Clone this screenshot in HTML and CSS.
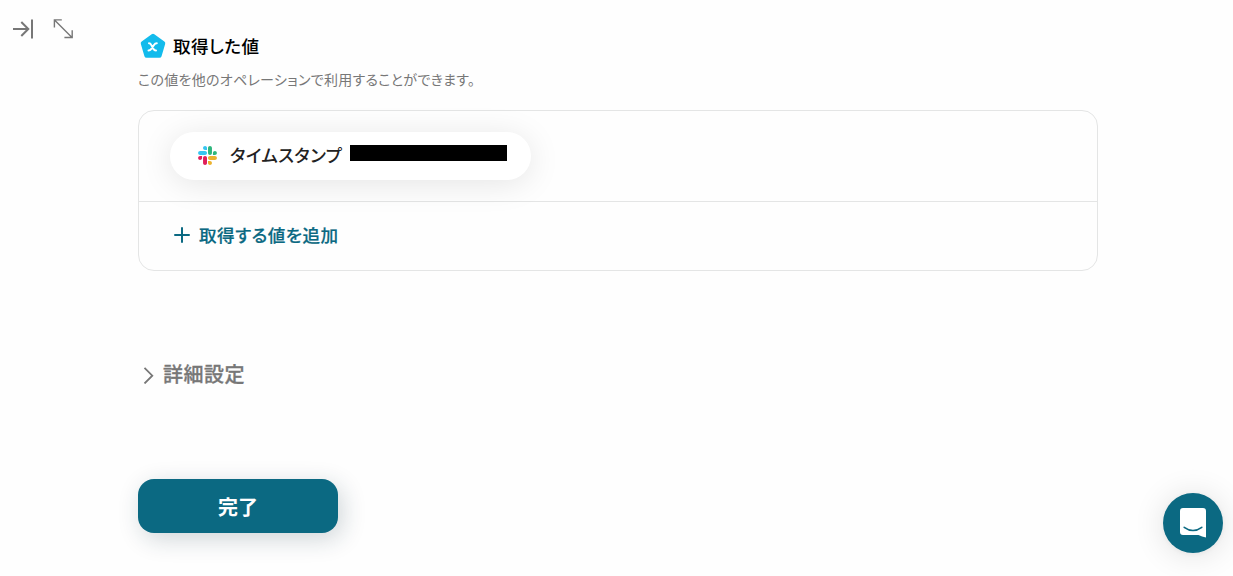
FILE: index.html
```html
<!DOCTYPE html>
<html lang="ja">
<head>
<meta charset="utf-8">
<title>取得した値</title>
<link rel="stylesheet" href="styles.css">
</head>
<body>
<div class="page">
  <nav class="tools">
    <svg width="22" height="22" viewBox="0 0 22 22" fill="none" stroke="#777" stroke-width="2"><path d="M1 11H16M9.300 4L16.300 11L9.300 18M20 1.500V20.500"/></svg>
    <svg width="22" height="22" viewBox="0 0 22 22" fill="none" stroke="#777" stroke-width="1.400"><path d="M2.500 2L20 19.500M2.400 9.500V1.900H9.800M12.400 19.500H20.200V12.200"/></svg>
  </nav>
  <main class="main">
    <header class="heading">
      <svg width="26" height="26" viewBox="0 0 26 26"><path d="M13 3L23 10.300L19.400 22.600H6.600L3 10.300Z" fill="#13bbec" stroke="#13bbec" stroke-width="4.500" stroke-linejoin="round"/><path d="M9 10.300C10.200 10.300 10.700 10.900 11.200 11.900L13.500 16.100C14 17 14.700 17.500 16 17.500M16.800 10.300C15.400 10.300 14.600 11 13.800 12.200L11.300 15.900C10.500 17 9.800 17.500 8.500 17.500" fill="none" stroke="#fff" stroke-width="2" stroke-linecap="round"/></svg>
      <h2 class="title">取得した値</h2>
    </header>
    <p class="note">この値を他のオペレーションで利用することができます。</p>
    <section class="card">
      <div class="values">
        <div class="pill">
          <svg class="slack" width="19" height="19" viewBox="0 0 127 127"><path fill="#e01e5a" d="M27.200 80c0 7.300-5.900 13.200-13.200 13.200S.8 87.300.8 80s5.900-13.200 13.200-13.200h13.200V80zm6.600 0c0-7.300 5.900-13.200 13.200-13.200S60.200 72.700 60.200 80v33c0 7.300-5.900 13.200-13.200 13.200s-13.200-5.900-13.200-13.200V80z"/><path fill="#36c5f0" d="M47 27c-7.300 0-13.200-5.900-13.200-13.200S39.700.6 47 .6s13.200 5.900 13.200 13.200V27H47zm0 6.700c7.300 0 13.200 5.900 13.200 13.200S54.300 60.100 47 60.100H13.900C6.600 60.100.7 54.200.7 46.900s5.900-13.200 13.200-13.200H47z"/><path fill="#2eb67d" d="M99.900 46.900c0-7.300 5.900-13.200 13.200-13.200s13.200 5.900 13.200 13.200-5.900 13.200-13.200 13.200H99.900V46.900zm-6.600 0c0 7.300-5.900 13.200-13.200 13.200s-13.200-5.900-13.200-13.200V13.800C66.900 6.500 72.800.6 80.100.6s13.200 5.900 13.200 13.200v33.100z"/><path fill="#ecb22e" d="M80.100 99.800c7.300 0 13.200 5.900 13.200 13.200s-5.900 13.200-13.200 13.200-13.200-5.900-13.200-13.200V99.800h13.200zm0-6.600c-7.300 0-13.200-5.900-13.200-13.200s5.900-13.200 13.200-13.200h33.100c7.300 0 13.200 5.900 13.200 13.200s-5.900 13.200-13.200 13.200H80.100z"/></svg>
          <span class="pill-label">タイムスタンプ</span>
          <span class="redacted"></span>
        </div>
      </div>
      <button class="add">
        <svg width="16" height="16" viewBox="0 0 16 16" fill="none" stroke="#0b6982" stroke-width="2" stroke-linecap="round"><path d="M8 1V15M1 8H15"/></svg>
        <span>取得する値を追加</span>
      </button>
    </section>
    <div class="advanced">
      <svg width="12" height="18" viewBox="0 0 12 18" fill="none" stroke="#777" stroke-width="1.800"><path d="M1.500 1.900L9.300 9.700L1.500 17.500"/></svg>
      <span class="advanced-label">詳細設定</span>
    </div>
    <button class="done">完了</button>
  </main>
</div>
<button class="chat" aria-label="チャット">
  <svg width="28" height="32" viewBox="0 0 28 32"><path d="M4 1H24A3 3 0 0 1 27 4V30.500Q23 29.800 19.500 28H4A3 3 0 0 1 1 25V4A3 3 0 0 1 4 1Z" fill="#fff"/><path d="M5.200 20.300Q14 26.700 22.800 20.300" fill="none" stroke="#0b6982" stroke-width="1.600" stroke-linecap="round"/></svg>
</button>
</body>
</html>
```
FILE: styles.css
```css
* { box-sizing: border-box; }
body {
  margin: 0;
  height: 576px;
  overflow: hidden;
  background: #fefefe;
  color: #000;
  font-family: "Noto Sans CJK JP", sans-serif;
  font-feature-settings: "palt";
}
button { border: 0; padding: 0; font: inherit; font-feature-settings: inherit; }
svg { display: block; flex: none; }
.page { display: flex; }
.tools {
  display: flex;
  gap: 18px;
  width: 138px;
  padding: 18px 0 0 12px;
}
.main { width: 960px; padding-top: 33px; }
.heading { display: flex; align-items: center; height: 26px; padding-left: 2px; gap: 7px; }
.title { margin: 0; font-size: 17.600px; font-weight: 500; letter-spacing: 0.400px; line-height: 26px; }
.note { margin: 10px 0 0; font-size: 14px; line-height: 20px; letter-spacing: 0.300px; color: #777; }
.card {
  margin-top: 21px;
  height: 161px;
  border: 1px solid #e4e5e5;
  border-radius: 16px;
}
.values { height: 91px; padding: 21px 31px; border-bottom: 1px solid #e4e5e5; }
.pill {
  display: flex;
  align-items: center;
  width: 361px;
  height: 48px;
  padding: 0 0 2px 28px;
  border-radius: 24px;
  background: #fff;
  box-shadow: 0 4px 32px rgba(0, 0, 0, 0.100);
}
.pill-label { width: 120px; margin-left: 13px; font-size: 17.600px; font-weight: 500; line-height: 26px; letter-spacing: 0.400px; color: #222; white-space: nowrap; }
.redacted { width: 157px; height: 16px; margin-top: -4px; background: #000; }
.add {
  display: flex;
  align-items: center;
  gap: 9px;
  height: 66px;
  padding-left: 35px;
  background: none;
  color: #0b6982;
  font-size: 17.600px;
  font-weight: 500;
  line-height: 28px;
  letter-spacing: 0.450px;
  -webkit-text-stroke: 0.200px #0b6982;
}
.advanced {
  display: flex;
  align-items: center;
  gap: 8px;
  height: 30px;
  margin-top: 89px;
  padding-left: 5px;
  color: #777;
  font-size: 20px;
  font-weight: 500;
  letter-spacing: 0.500px;
  -webkit-text-stroke: 0.300px #777;
}
.advanced-label { padding-bottom: 3px; }
.done {
  display: block;
  width: 200px;
  height: 54px;
  margin-top: 89px;
  border-radius: 16px;
  background: #0b6982;
  color: #fff;
  font-size: 20px;
  font-weight: 700;
  box-shadow: 4px 6px 24px rgba(20, 50, 65, 0.200);
}
.chat {
  position: fixed;
  right: 10px;
  bottom: 23px;
  display: grid;
  place-items: center;
  width: 60px;
  height: 60px;
  border-radius: 50%;
  background: #0b6982;
  box-shadow: 0 1px 6px rgba(0, 0, 0, 0.060), 0 2px 32px rgba(0, 0, 0, 0.120);
}
```
